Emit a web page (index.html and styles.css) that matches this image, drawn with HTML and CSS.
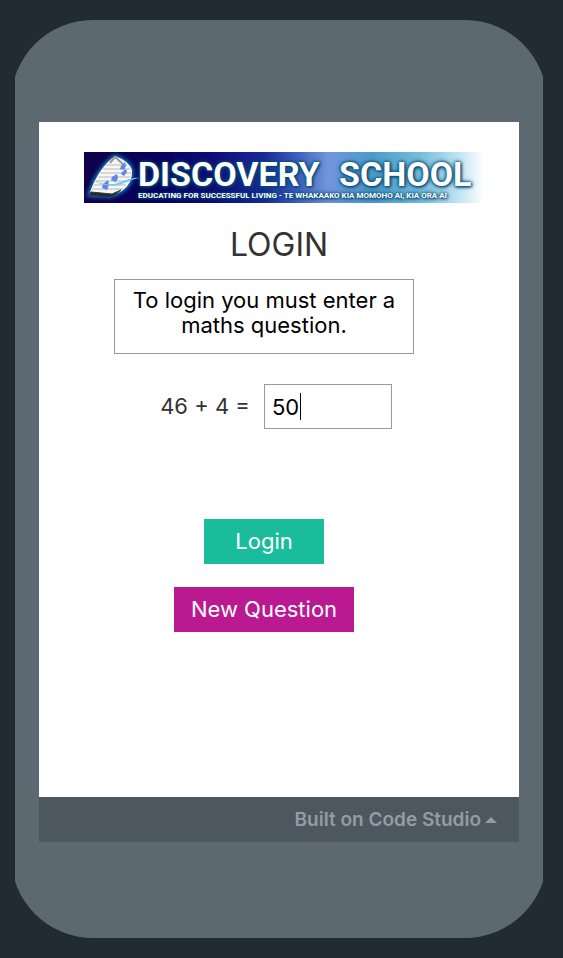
FILE: index.html
```html
<!DOCTYPE html>
<html lang="en">
<head>
<meta charset="utf-8">
<meta name="viewport" content="width=device-width, initial-scale=1">
<title>Discovery School Login</title>
<link rel="stylesheet" href="styles.css">
</head>
<body>
<div class="phone">
  <div class="screen">
    <main class="app">
      <svg class="banner" viewBox="0 0 400 51" role="img" aria-label="Discovery School">
        <defs>
          <linearGradient id="sky">
            <stop offset="0" stop-color="#12004a"/>
            <stop offset=".17" stop-color="#08005c"/>
            <stop offset=".32" stop-color="#100b78"/>
            <stop offset=".45" stop-color="#182b98"/>
            <stop offset=".52" stop-color="#3557b8"/>
            <stop offset=".61" stop-color="#7295dd"/>
            <stop offset=".72" stop-color="#4c9aca"/>
            <stop offset=".84" stop-color="#75bddd"/>
            <stop offset=".94" stop-color="#c3e5f3"/>
            <stop offset="1" stop-color="#fff"/>
          </linearGradient>
          <filter id="glow" x="-20%" y="-40%" width="140%" height="180%"><feGaussianBlur stdDeviation="2"/></filter>
        </defs>
        <rect width="400" height="51" fill="url(#sky)"/>
        <path d="M5 43Q14 16 31 4q14 5 17 14 1 13-10 21l-11 5Z" fill="#1285c4" stroke="#1285c4" stroke-width="3" filter="url(#glow)"/>
        <path d="M5 43Q14 16 31 4q14 5 17 14 1 13-10 21l-11 5Z" fill="#f7f7f4"/>
        <path d="M22 13h21M19 17h27M16 21h31M14 25h32M12 29h32M10 33h32M8 37h31" stroke="#b4b9c0" fill="none"/>
        <path d="M26 11l5-6 9 8" fill="none" stroke="#999" stroke-width="2"/>
        <path d="M5 43 7 40l21 2 9-4-8 6-5 1Z" fill="#202936" stroke="#303844"/>
        <path d="M41 10l1 4-2 4-4-1 1-3ZM42 17l1 3-3 4-3-2 1-2ZM33 22l1 4-2 4-5-2 1-3ZM24 28l1 5-2 5-5-2 1-4Z" fill="#6384e8"/>
        <path d="M7 28c9 3 18 6 27 3s15-6 22-5c-9 1-14 5-22 7-10 2-18-1-27-5" fill="#76c8ed"/>
        <g class="banner-text">
          <text class="school" x="54" y="34">DISCOVERY</text>
          <text class="school" x="255" y="34">SCHOOL</text>
          <text class="motto" x="54" y="46">EDUCATING FOR SUCCESSFUL LIVING - TE WHAKAAKO KIA MOMOHO AI, KIA ORA AI</text>
        </g>
      </svg>
      <h1 class="title">LOGIN</h1>
      <form class="login">
        <p class="message">To login you must enter a maths question.</p>
        <div class="question">
          <label for="answer">46 + 4 =</label>
          <div class="answer-box">
            <input id="answer" type="text" value="50">
            <span class="caret"></span>
          </div>
        </div>
        <button class="btn btn-login" type="button">Login</button>
        <button class="btn btn-new" type="button">New Question</button>
      </form>
    </main>
    <footer class="footer">
      <a class="built" href="#">Built on Code Studio <svg class="arrow" viewBox="0 0 12 6" aria-hidden="true"><path d="M0 6 6 0l6 6Z"/></svg></a>
    </footer>
  </div>
</div>
</body>
</html>
```
FILE: styles.css
```css
* { box-sizing: border-box; }

body {
  margin: 0;
  padding: 20px 20px 20px 15px;
  min-height: 100vh;
  display: flex;
  background: #212b34;
  color: #333;
  font-family: Inter, "Open Sans", sans-serif;
  font-size: 22px;
  line-height: 25px;
}

/* The rounded outline reaches past both sides, so the corners meet the edges at an angle. */
.phone {
  flex: 1;
  display: flex;
  padding: 102px 24px 96px;
  background: #5d6970;
  clip-path: inset(0 -4px round 82px);
}

.screen {
  flex: 1;
  display: flex;
  flex-direction: column;
  background: #fff;
}

.app {
  flex: 1;
  display: flex;
  flex-direction: column;
  padding: 30px 0;
}

.banner {
  display: block;
  margin: 0 35px 0 45px;
}

.banner-text {
  fill: #fff;
  font-family: Roboto, "Open Sans", sans-serif;
  font-weight: 700;
  text-shadow: 0 0 3px #06436b, 0 0 5px #06537b, 1px 1px 3px #06436b;
}

.school { font-size: 34px; }
.motto { font-size: 8px; }

.title {
  margin: 24px 0 0;
  font-size: 32px;
  font-weight: 400;
  line-height: 36px;
  text-align: center;
}

.login {
  display: flex;
  flex-direction: column;
  align-items: center;
  padding-right: 30px;
}

.message {
  width: 300px;
  height: 75px;
  margin: 16px 0 30px;
  padding: 8px 15px;
  border: 1px solid #999;
  color: #000;
  text-align: center;
}

.question {
  display: flex;
  align-items: center;
  gap: 14px;
  margin: 0 0 90px 24px;
}

.answer-box { position: relative; }

.answer-box input {
  display: block;
  width: 128px;
  height: 45px;
  padding: 0 7px;
  border: 1px solid #999;
  border-radius: 0;
  outline: none;
  background: #fff;
  color: #000;
  font: inherit;
}

.caret {
  position: absolute;
  top: 9px;
  left: 36px;
  width: 1px;
  height: 27px;
  background: #000;
}

.btn {
  height: 45px;
  padding: 0;
  border: 0;
  color: #fff;
  font: inherit;
}

.btn-login {
  width: 120px;
  margin-bottom: 23px;
  background: #1abc9c;
}

.btn-new {
  width: 180px;
  background: #ba1991;
}

.footer {
  display: flex;
  align-items: center;
  justify-content: flex-end;
  height: 45px;
  padding-right: 22px;
  background: #4d575f;
}

.built {
  display: flex;
  align-items: center;
  gap: 4px;
  color: #949ca2;
  font-size: 19px;
  font-weight: 600;
  text-decoration: none;
}

.arrow {
  width: 12px;
  height: 6px;
  fill: currentColor;
}
```
